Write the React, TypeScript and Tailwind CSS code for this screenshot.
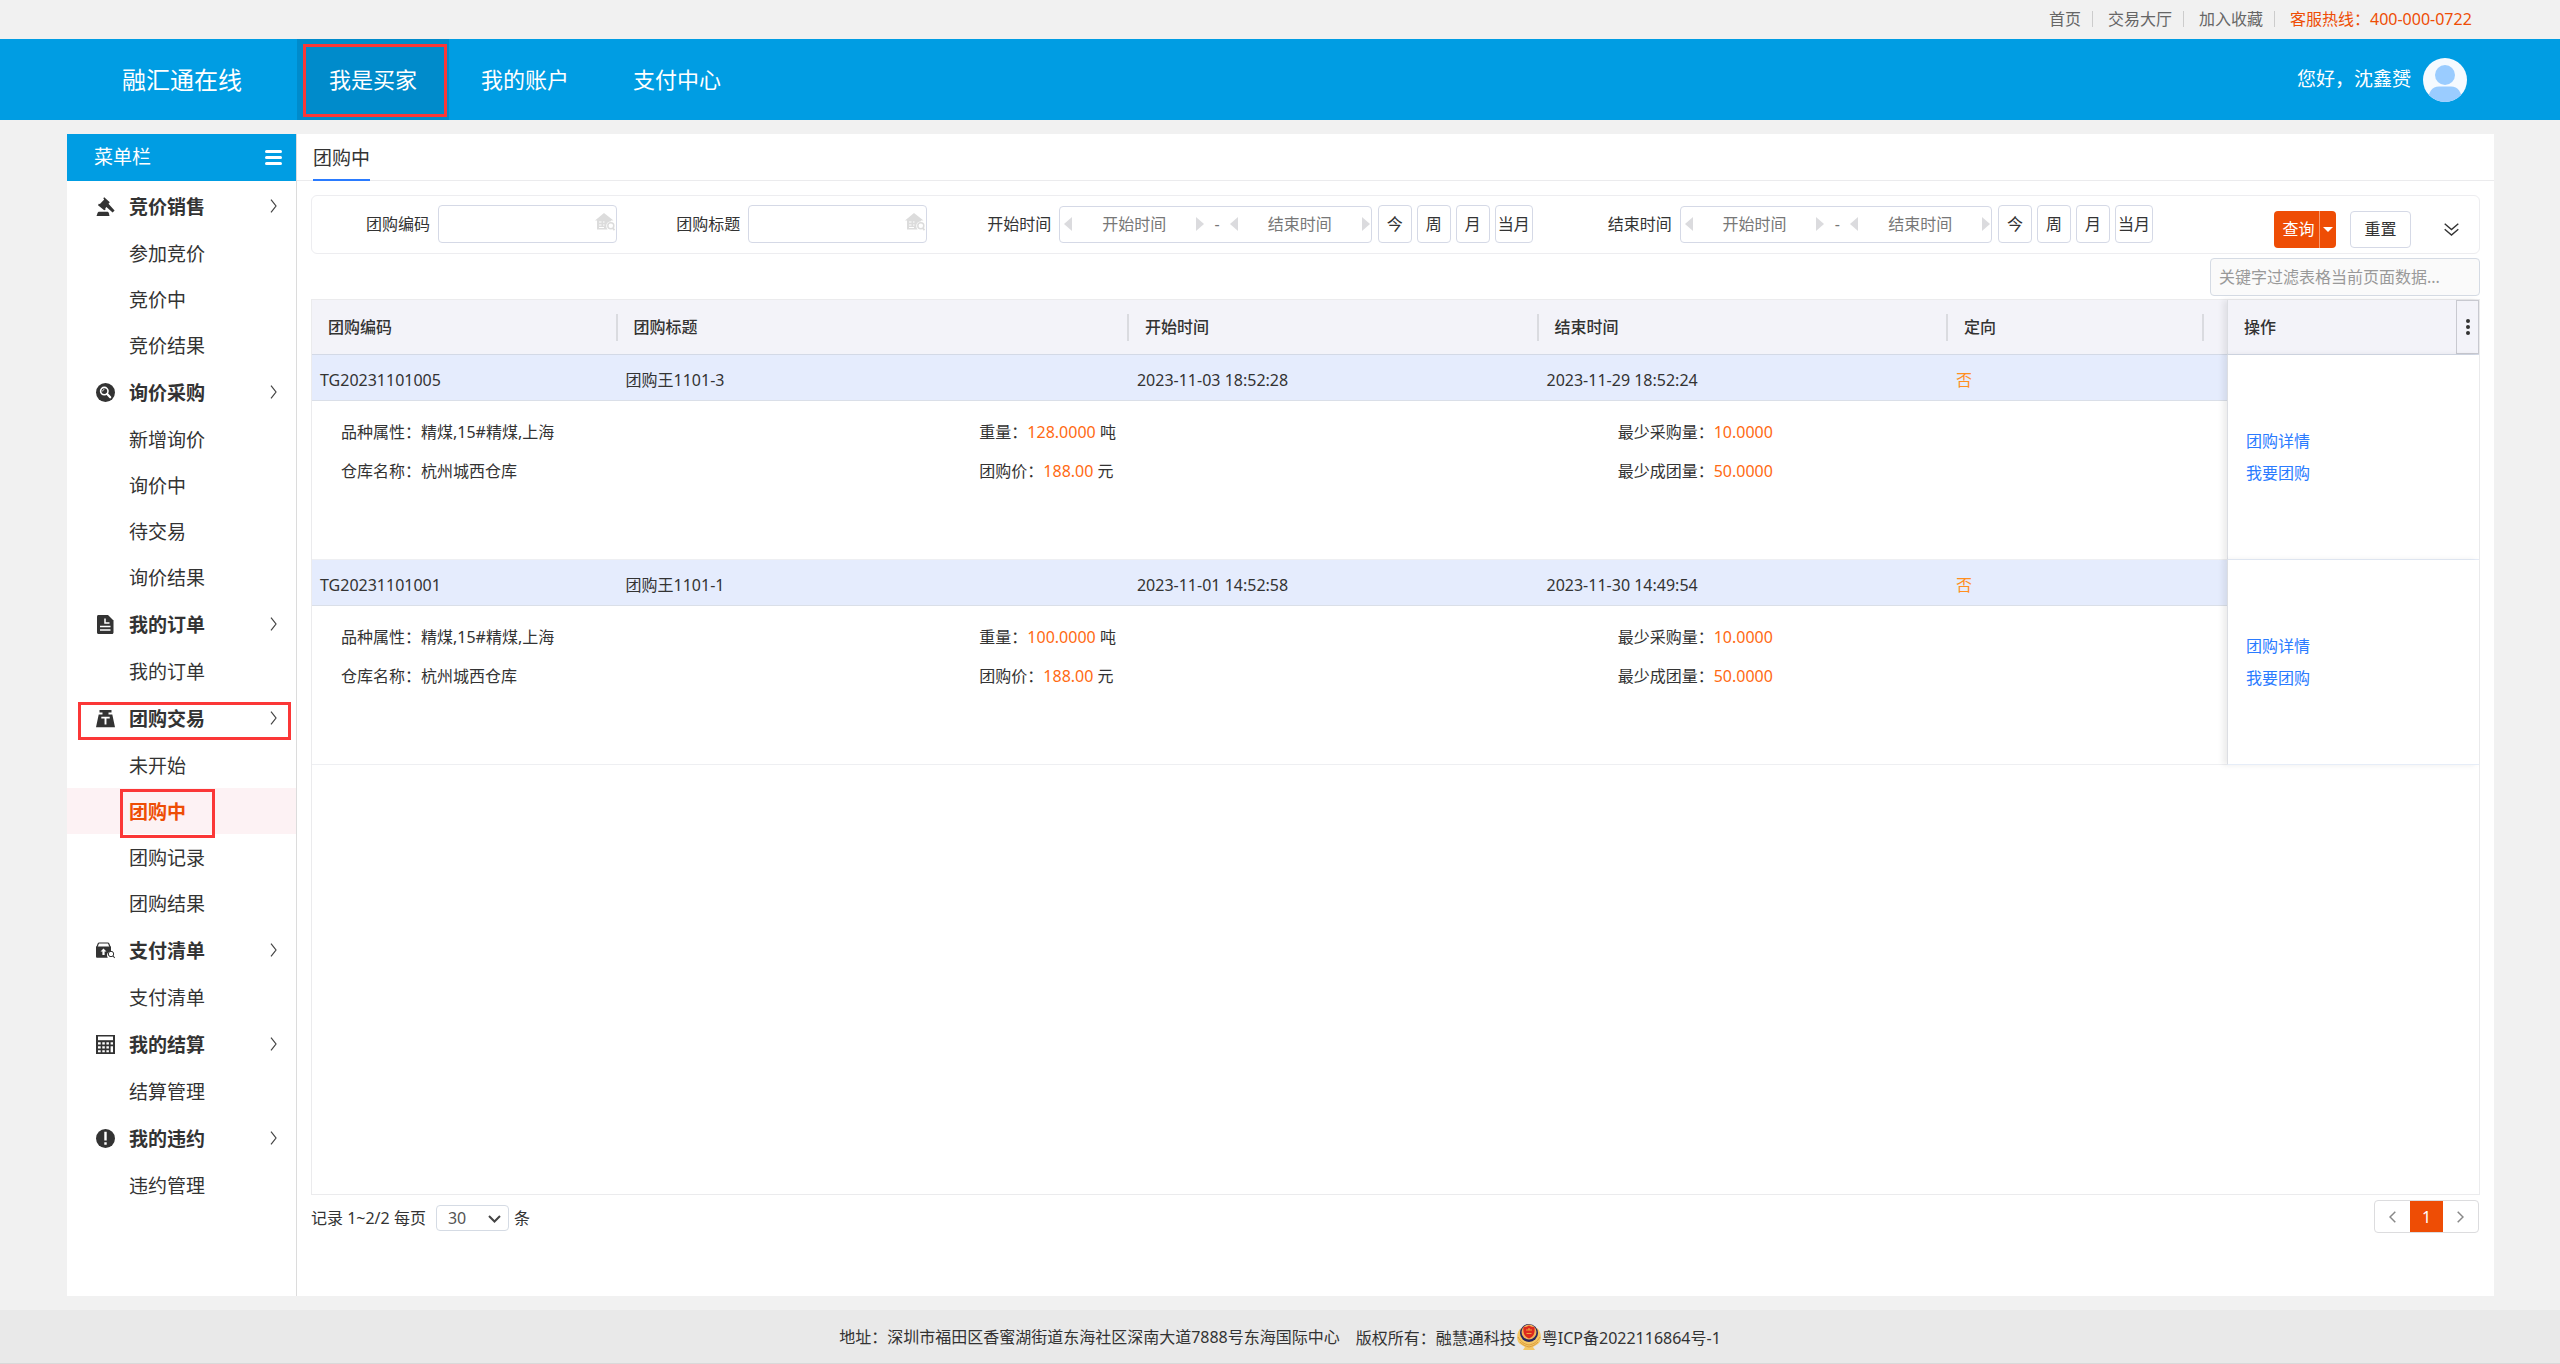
import React from 'react';
import clsx from 'clsx';

interface MenuGroup {
  title: string;
  icon: () => React.ReactElement;
  items: string[];
  marked?: boolean;
}

interface Deal {
  code: string;
  title: string;
  start: string;
  end: string;
  goods: string;
  weight: string;
  minBuy: string;
  depot: string;
  price: string;
  minGroup: string;
}

const GavelIcon = () => (
  <svg width="19" height="19" viewBox="0 0 19 19" fill="currentColor">
    <path d="M8.200.2 13.800 5.200 12.600 6.500 12.900 7.200 18.600 13.400 16.600 15.600 10.400 9.900 9.300 11.200 9.600 12.500 8.200 13.300 2 8.200 2.800 6.800 3.900 6.900 8.200 2.400 7.300 1.200z" />
    <path d="M1.500 16.200c.4-1 1-1.400 2-1.400h7.400c1 0 1.600.4 2 1.400l.6 2.800H.5z" />
  </svg>
);

const InquiryIcon = () => (
  <svg width="19" height="19" viewBox="0 0 19 19">
    <circle cx="9.500" cy="9.500" r="9.500" fill="currentColor" />
    <circle cx="8.300" cy="8.100" r="3.700" fill="none" stroke="#fff" strokeWidth="1.600" />
    <path d="M6.600 8.300c0-1 .7-1.700 1.700-1.800" fill="none" stroke="#fff" strokeWidth="1" />
    <path d="m11.200 11 3 3.300" stroke="#fff" strokeWidth="2.200" strokeLinecap="round" />
  </svg>
);

const OrderIcon = () => (
  <svg width="19" height="19" viewBox="0 0 19 19">
    <path d="M2.500 0H12l5.500 5.500v12c0 .9-.6 1.500-1.500 1.500H2.500C1.600 19 1 18.400 1 17.500v-16C1 .6 1.600 0 2.500 0z" fill="currentColor" />
    <path d="M9 3.500V8h4.500M4 11.500h10.500M4 15h10.500" fill="none" stroke="#fff" strokeWidth="1.500" />
  </svg>
);

const WeightIcon = () => (
  <svg width="19" height="19" viewBox="0 0 19 19">
    <path d="M3.500 1h12v2.600h-3V5.500h3.800L19 18.300H0L2.700 5.500h3.800V3.600h-3z" fill="currentColor" />
    <path d="M5.300 8.600h8.400M9.500 8.600v7" stroke="#fff" strokeWidth="1.900" />
  </svg>
);

const PaymentIcon = () => (
  <svg width="19" height="19" viewBox="0 0 19 19">
    <path d="M.8 6.500 2.200 2.700c.2-.5.500-.7 1-.7h8.600c.5 0 .8.200 1 .7l1.400 3.800" fill="none" stroke="currentColor" strokeWidth="1.200" />
    <path d="M0 5.500h15v4.800c-2.500.2-4 1.800-4 3.900 0 1 .3 1.800.8 2.500H1.300C.5 16.700 0 16.200 0 15.400z" fill="currentColor" />
    <path d="m7.500 7.500 3 3H8.600v3.400H6.400v-3.400H4.500z" fill="#fff" />
    <circle cx="15" cy="13" r="2.700" fill="none" stroke="currentColor" strokeWidth="1" />
    <path d="m17 15 1.800 2" stroke="currentColor" strokeWidth="1.100" />
  </svg>
);

const CalculatorIcon = () => (
  <svg width="19" height="19" viewBox="0 0 19 19">
    <path d="M0 0h19v19H0z" fill="currentColor" />
    <path d="M2 1.500h15v3.700H2z" fill="#fff" />
    <path
      d="M2 7.200h2.700v2.300H2zM6.300 7.200h2.500v2.300H6.300zM10.400 7.200h2.500v2.300h-2.500zM14.600 7.200H17v2.300h-2.400zM2 11.300h2.700v2.300H2zM6.300 11.300h2.500v2.300H6.300zM10.400 11.300h2.500v2.300h-2.500zM14.600 11.300H17v5.900h-2.400zM2 15.200h2.700v2H2zM6.300 15.200h2.500v2H6.300zM10.400 15.200h2.500v2h-2.500z"
      fill="#fff"
    />
  </svg>
);

const BreachIcon = () => (
  <svg width="19" height="19" viewBox="0 0 19 19">
    <circle cx="9.500" cy="9.500" r="9.500" fill="currentColor" />
    <path d="M8.300 2.800h2.400v8.800H8.300zM8.300 13.200h2.400v2.500H8.300z" fill="#fff" />
  </svg>
);

const MENU: MenuGroup[] = [
  { title: '竞价销售', icon: GavelIcon, items: ['参加竞价', '竞价中', '竞价结果'] },
  { title: '询价采购', icon: InquiryIcon, items: ['新增询价', '询价中', '待交易', '询价结果'] },
  { title: '我的订单', icon: OrderIcon, items: ['我的订单'] },
  { title: '团购交易', icon: WeightIcon, items: ['未开始', '团购中', '团购记录', '团购结果'], marked: true },
  { title: '支付清单', icon: PaymentIcon, items: ['支付清单'] },
  { title: '我的结算', icon: CalculatorIcon, items: ['结算管理'] },
  { title: '我的违约', icon: BreachIcon, items: ['违约管理'] }
];

const ACTIVE_ITEM = '团购中';

const DEALS: Deal[] = [
  {
    code: 'TG20231101005',
    title: '团购王1101-3',
    start: '2023-11-03 18:52:28',
    end: '2023-11-29 18:52:24',
    goods: '精煤,15#精煤,上海',
    weight: '128.0000',
    minBuy: '10.0000',
    depot: '杭州城西仓库',
    price: '188.00',
    minGroup: '50.0000'
  },
  {
    code: 'TG20231101001',
    title: '团购王1101-1',
    start: '2023-11-01 14:52:58',
    end: '2023-11-30 14:49:54',
    goods: '精煤,15#精煤,上海',
    weight: '100.0000',
    minBuy: '10.0000',
    depot: '杭州城西仓库',
    price: '188.00',
    minGroup: '50.0000'
  }
];

const COLUMNS = [
  { name: '团购编码', width: 'w-[14.1%]' },
  { name: '团购标题', width: 'w-[23.6%]' },
  { name: '开始时间', width: 'w-[18.9%]' },
  { name: '结束时间', width: 'w-[18.9%]' },
  { name: '定向', width: 'w-[11.8%]' }
];

const NAV = ['我是买家', '我的账户', '支付中心'];

function TopBar() {
  return (
    <div className="flex h-[39px] items-center justify-end pr-[80px] pb-0.5 text-[#666]">
      {['首页', '交易大厅', '加入收藏'].map(text => (
        <React.Fragment key={text}>
          <a href="#">{text}</a>
          <span className="ml-[11px] mr-[15px] h-4 w-px bg-[#ccc]" />
        </React.Fragment>
      ))}
      <span className="w-[190px] text-[#ee4d05]">客服热线：400-000-0722</span>
    </div>
  );
}

function Header() {
  return (
    <header className="flex h-[81px] items-center bg-[#009de3] text-white">
      <div className="w-[297px] pl-[122px] text-2xl">融汇通在线</div>
      <nav className="flex h-full flex-1">
        {NAV.map((text, i) => (
          <a
            key={text}
            href="#"
            className={clsx('relative flex h-full items-center px-8 text-[22px]', i === 0 && 'bg-[#008bcb]')}
          >
            {text}
            {i === 0 && <span className="absolute top-[5px] right-[2px] bottom-[3px] left-[6px] border-3 border-[#fb3737]" />}
          </a>
        ))}
      </nav>
      <div className="flex items-center gap-[12px] pr-[93px] text-[19px]">
        您好，沈鑫赟
        <svg width="44" height="44" viewBox="0 0 44 44">
          <clipPath id="avatar">
            <circle cx="22" cy="22" r="22" />
          </clipPath>
          <g clipPath="url(#avatar)">
            <path d="M0 0h44v44H0z" fill="#f5faff" />
            <circle cx="22" cy="17" r="10" fill="#9accff" />
            <path d="M5 44c0-10 4-15.500 11-15.500h12c7 0 11 5.500 11 15.500z" fill="#9accff" />
          </g>
        </svg>
      </div>
    </header>
  );
}

function Sidebar() {
  return (
    <aside className="w-[230px] shrink-0 border-r border-[#dcdcdc] text-[19px]">
      <div className="mb-px flex h-[47px] items-center justify-between bg-[#009de3] pr-[14px] pl-[27px] text-white">
        菜单栏
        <button aria-label="收起菜单" className="flex w-[17px] flex-col gap-[3px]">
          <span className="h-[3px] rounded-sm bg-white" />
          <span className="h-[3px] rounded-sm bg-white" />
          <span className="h-[3px] rounded-sm bg-white" />
        </button>
      </div>
      {MENU.map(group => {
        const Icon = group.icon;
        return (
          <div key={group.title}>
            <button className="relative flex h-12 w-full items-center pr-[19px] pl-[29px] font-bold">
              <Icon />
              <span className="ml-[14px] pt-0.5">{group.title}</span>
              <svg className="ml-auto" width="7" height="14" viewBox="0 0 7 14" fill="none" stroke="#444" strokeWidth="1.200">
                <path d="m1 .7 5 6.300-5 6.300" />
              </svg>
              {group.marked && <span className="absolute top-[8px] right-[5px] bottom-[2px] left-[11px] border-3 border-[#fb3737]" />}
            </button>
            {group.items.map(item => {
              const active = item === ACTIVE_ITEM;
              return (
                <a
                  key={item}
                  href="#"
                  className={clsx('relative flex h-[46px] items-center pt-0.5 pl-[62px]', active && 'bg-[#fdf2f4] font-bold text-[#ee4d05]')}
                >
                  {item}
                  {active && <span className="absolute top-px -bottom-1 left-[53px] w-[95px] border-3 border-[#fb3737]" />}
                </a>
              );
            })}
          </div>
        );
      })}
    </aside>
  );
}

function TextField({ id, label }: { id: string; label: string }) {
  return (
    <div className="flex items-center pr-[5px]">
      <label htmlFor={id} className="w-[118px] text-right">{label}</label>
      <div className="relative ml-2 min-w-0 flex-1">
        <input id={id} type="text" className="h-[38px] w-full rounded border border-[#d5d9e6] px-2 outline-none" />
        <svg className="absolute top-[8px] right-[2px]" width="20" height="18" viewBox="0 0 20 18" fill="#dcdcdc">
          <path d="M9 0 18.500 7.500H16V8.300c-3 .2-4.700 2-4.700 4.700 0 1.400.5 2.600 1.400 3.500H2V7.500H0z" />
          <path d="M4 9h2.500M4 12h2.500M4 14.500h5M8 9h1.500M8 12h1.500" stroke="#fff" strokeWidth="1.200" />
          <circle cx="15.800" cy="12.800" r="3" fill="none" stroke="#dcdcdc" strokeWidth="1.500" />
          <path d="m17.800 15 1.700 2.200" stroke="#dcdcdc" strokeWidth="1.800" />
        </svg>
      </div>
    </div>
  );
}

function DateInput({ label }: { label: string }) {
  return (
    <div className="flex min-w-0 flex-1 items-center">
      <svg className="shrink-0" width="8" height="14" viewBox="0 0 8 14" fill="#dbdbde">
        <path d="M8 0v14L0 7z" />
      </svg>
      <input
        type="text"
        aria-label={label}
        placeholder={label}
        className="w-full min-w-0 text-center outline-none placeholder:text-[#777]"
      />
      <svg className="shrink-0" width="8" height="14" viewBox="0 0 8 14" fill="#dbdbde">
        <path d="M0 0v14l8-7z" />
      </svg>
    </div>
  );
}

function DateField({ label }: { label: string }) {
  return (
    <div className="flex items-center gap-[5px] pr-5">
      <span className="w-[119px] text-right">{label}</span>
      <div className="mr-px ml-[3px] flex h-[37px] min-w-0 flex-1 items-center rounded border border-[#d5d9e6] pr-px pl-1">
        <DateInput label="开始时间" />
        <span className="w-[26px] text-center text-[#777]">-</span>
        <DateInput label="结束时间" />
      </div>
      {['今', '周', '月', '当月'].map(text => (
        <button
          key={text}
          className={clsx('h-[38px] rounded border border-[#d5d9e6] bg-white', text.length > 1 ? 'w-[38px]' : 'w-[34px]')}
        >
          {text}
        </button>
      ))}
    </div>
  );
}

function Filters() {
  return (
    <form className="mt-[14px] flex h-[59px] rounded-md border border-[#ededf0] pt-[9px]" onSubmit={e => e.preventDefault()}>
      <div className="grid h-[38px] flex-1 grid-cols-[1fr_1fr_2fr_2fr]">
        <TextField id="deal-code" label="团购编码" />
        <TextField id="deal-title" label="团购标题" />
        <DateField label="开始时间" />
        <DateField label="结束时间" />
      </div>
      <div className="flex w-[306px] items-center justify-end gap-[14px] pr-[20px]">
        <div className="flex h-[37px] overflow-hidden rounded bg-[#ee4d05] text-white">
          <button className="w-[45px] pl-1">查询</button>
          <button aria-label="更多查询" className="flex w-[17px] items-center justify-center border-l border-[#f79a70]">
            <svg width="10" height="5" viewBox="0 0 10 5" fill="#fff">
              <path d="M0 0h10L5 5z" />
            </svg>
          </button>
        </div>
        <button type="reset" className="h-[37px] w-[61px] rounded border border-[#d5d9e6]">重置</button>
        <button aria-label="展开筛选" className="ml-[19px]">
          <svg width="15" height="13" viewBox="0 0 15 13" fill="none" stroke="#333" strokeWidth="1.400">
            <path d="m.7.7 6.800 5.800L14.300.7M.7 6.200 7.500 12l6.800-5.800" />
          </svg>
        </button>
      </div>
    </form>
  );
}

function Detail({ label, value, unit, plain }: { label: string; value: string; unit?: string; plain?: boolean }) {
  return (
    <p className="pl-[29px] leading-[39px]">
      {label}：<span className={plain ? '' : 'text-[#ff6a13]'}>{value}</span>
      {unit && ` ${unit}`}
    </p>
  );
}

// the actions column is pinned, its shadow falls on the cells at its left
const PINNED = 'relative z-10 border-l border-[#dcdee3] shadow-[-4px_0_6px_rgba(0,0,0,0.08)]';

function DealRows({ deal }: { deal: Deal }) {
  return (
    <>
      <tr className="h-[46px] bg-[#e5ecfd]">
        {[deal.code, deal.title, deal.start, deal.end].map(text => (
          <td key={text} className="border-b border-[#dadfe8] pt-1 pl-2">{text}</td>
        ))}
        <td className="border-b border-[#dadfe8] pt-1 pl-2 text-[#ff8f1f]">否</td>
        <td className="border-b border-[#dadfe8]" />
        <td rowSpan={2} className={clsx(PINNED, 'border-b border-b-[#e6edf8] bg-white pl-[18px] leading-8 text-[#2a7bff]')}>
          <a href="#" className="block">团购详情</a>
          <a href="#" className="block">我要团购</a>
        </td>
      </tr>
      <tr className="h-[159px]">
        <td colSpan={6} className="border-b border-[#eeeff2] pt-3 align-top">
          <div className="grid grid-cols-3">
            <Detail label="品种属性" value={deal.goods} plain />
            <Detail label="重量" value={deal.weight} unit="吨" />
            <Detail label="最少采购量" value={deal.minBuy} />
            <Detail label="仓库名称" value={deal.depot} plain />
            <Detail label="团购价" value={deal.price} unit="元" />
            <Detail label="最少成团量" value={deal.minGroup} />
          </div>
        </td>
      </tr>
    </>
  );
}

function DealTable() {
  return (
    <div className="mt-[3px] flex-1 border border-[#ebebed]">
      <table className="w-full table-fixed border-separate border-spacing-0">
        <thead>
          <tr className="h-[55px] bg-[#f3f3f9] text-left">
            {COLUMNS.map(col => (
              <th key={col.name} className={clsx(col.width, 'border-b border-[#d3d9e6] font-medium')}>
                <div className="flex h-[27px] items-center border-r-2 border-[#dadbe0] pl-4">{col.name}</div>
              </th>
            ))}
            <th className="border-b border-[#d3d9e6]" />
            <th className={clsx(PINNED, 'w-[252px] border-b border-b-[#d3d9e6] bg-[#f3f3f9] font-medium')}>
              <div className="flex h-[54px] items-center justify-between pl-4">
                操作
                <button aria-label="列设置" className="flex h-full w-[23px] items-center justify-center border border-[#c8c9d0]">
                  <svg width="4" height="16" viewBox="0 0 4 16" fill="#333">
                    <circle cx="2" cy="2" r="2" />
                    <circle cx="2" cy="8" r="2" />
                    <circle cx="2" cy="14" r="2" />
                  </svg>
                </button>
              </div>
            </th>
          </tr>
        </thead>
        <tbody>
          {DEALS.map(deal => (
            <DealRows key={deal.code} deal={deal} />
          ))}
        </tbody>
      </table>
    </div>
  );
}

function Pager() {
  return (
    <div className="flex items-start justify-between pt-[5px] pb-[63px]">
      <div className="mt-[5px] flex h-[26px] items-center">
        <label htmlFor="page-size">记录 1~2/2 每页</label>
        <div className="relative mr-[5px] ml-[10px] h-[26px]">
          <select
            id="page-size"
            className="block h-[26px] w-[73px] appearance-none rounded border border-[#d5dbe4] bg-white pl-[11px] leading-6 text-[#555]"
          >
            <option>30</option>
          </select>
          <svg className="absolute top-[10px] right-[8px]" width="13" height="8" viewBox="0 0 13 8" fill="none" stroke="#444" strokeWidth="2">
            <path d="m1 1 5.500 5.500L12 1" />
          </svg>
        </div>
        条
      </div>
      <div className="mr-px flex h-[33px] overflow-hidden rounded border border-[#dcdcde]">
        <button aria-label="上一页" className="flex w-[35px] items-center justify-center">
          <svg width="7" height="12" viewBox="0 0 7 12" fill="none" stroke="#888" strokeWidth="1.500">
            <path d="M6.300.7 1 6l5.300 5.300" />
          </svg>
        </button>
        <button className="-my-px w-[33px] bg-[#ee4d05] text-white">1</button>
        <button aria-label="下一页" className="flex w-[35px] items-center justify-center">
          <svg width="7" height="12" viewBox="0 0 7 12" fill="none" stroke="#888" strokeWidth="1.500">
            <path d="M.7.7 6 6 .7 11.300" />
          </svg>
        </button>
      </div>
    </div>
  );
}

function Footer() {
  return (
    <footer className="mt-[14px] flex h-[54px] items-center justify-center border-b border-[#d9d9d9] bg-[#e9e9e9]">
      <span className="mr-4">地址：深圳市福田区香蜜湖街道东海社区深南大道7888号东海国际中心</span>
      <span className="pt-0.5">版权所有：融慧通科技</span>
      <svg width="26" height="27" viewBox="0 0 26 27">
        <path d="M5 5C0 9 0 18 4 21l5 3-2 3h12l-2-3 5-3c4-3 4-12-1-16z" fill="#f3c766" />
        <path d="M2 14c3 5 6 7 11 8 5-1 8-3 11-8M4 19c3 3 5 4 9 5 4-1 6-2 9-5" fill="none" stroke="#dd9c3c" strokeWidth="1" />
        <circle cx="13" cy="10" r="9" fill="#25265f" />
        <circle cx="13" cy="9" r="7.500" fill="#f0b25a" />
        <path d="M13 2.500c2 1.500 3.500 1.500 5.500 1.500.5 5.500 0 9.500-5.500 11.500C7.500 13.500 7 9.500 7.500 4c2 0 3.500 0 5.500-1.500z" fill="#dc2a1e" />
        <path d="M10 7h6M10.500 10.500h5M13 5v2" stroke="#f0a13c" strokeWidth="1.200" />
      </svg>
      <a href="#" className="pt-0.5">粤ICP备2022116864号-1</a>
    </footer>
  );
}

export default function App() {
  return (
    <div
      lang="zh-CN"
      className="flex min-h-screen flex-col bg-[#f1f1f1] font-['Noto_Sans','Noto_Sans_CJK_SC',sans-serif] text-base text-[#333]"
    >
      <TopBar />
      <Header />
      <div className="mt-[14px] mr-[66px] ml-[67px] flex flex-1 bg-white">
        <Sidebar />
        <main className="flex min-w-0 flex-1 flex-col">
          <div className="flex h-[47px] border-b border-[#ebebed] pl-4">
            <button className="-mb-px border-b-2 border-[#2a7bff] pt-1 text-[19px]">团购中</button>
          </div>
          <div className="flex flex-1 flex-col px-[14px]">
            <Filters />
            <input
              type="text"
              aria-label="关键字过滤"
              placeholder="关键字过滤表格当前页面数据..."
              className="mt-1 h-[38px] w-[270px] self-end rounded border border-[#d5dbe4] bg-[#fafafa] px-2 outline-none placeholder:text-[#999]"
            />
            <DealTable />
            <Pager />
          </div>
        </main>
      </div>
      <Footer />
    </div>
  );
}
